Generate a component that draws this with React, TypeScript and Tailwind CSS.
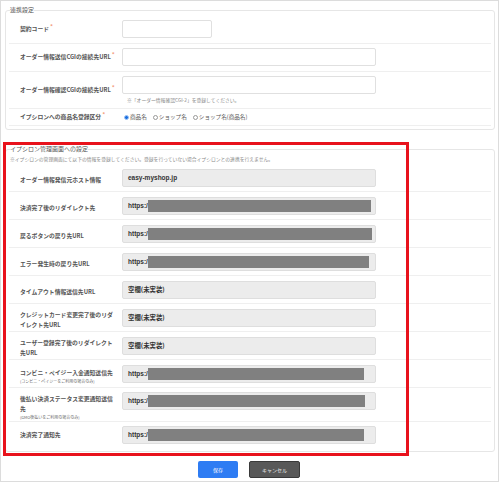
import React from "react";

const JP = "font-['Noto_Sans_CJK_JP',sans-serif]";

type LinkRow = {
  label: string;
  sub?: string;
  kind: "host" | "url" | "blank";
  bar?: number;
  tall?: boolean;
};

const linkRows: LinkRow[] = [
  { label: "オーダー情報発信元ホスト情報", kind: "host" },
  { label: "決済完了後のリダイレクト先", kind: "url", bar: 223 },
  { label: "戻るボタンの戻り先URL", kind: "url", bar: 224 },
  { label: "エラー発生時の戻り先URL", kind: "url", bar: 221 },
  { label: "タイムアウト情報送信先URL", kind: "blank" },
  { label: "クレジットカード変更完了後のリダイレクト先URL", kind: "blank" },
  { label: "ユーザー登録完了後のリダイレクト先URL", kind: "blank" },
  { label: "コンビニ・ペイジー入金通知送信先", sub: "(コンビニ・ペイジーをご利用の場合のみ)", kind: "url", bar: 216 },
  { label: "後払い決済ステータス変更通知送信先", sub: "(GMO後払いをご利用の場合のみ)", kind: "url", bar: 217, tall: true },
];

function Required() {
  return <span className="ml-[1px] align-top text-[6px] font-bold leading-[5px] text-[#f3a07f]">*</span>;
}

function Label({ text, required, sub }: { text: string; required?: boolean; sub?: string }) {
  return (
    <div className="w-[113px] shrink-0 self-center pl-[11px] pr-[6px]">
      <p className="text-[5.8px] font-semibold leading-[10px] text-[#555]">
        {text}
        {required ? <Required /> : null}
      </p>
      {sub ? <p className="text-[4px] leading-[6px] text-[#666]">{sub}</p> : null}
    </div>
  );
}

function Radio({ label, checked }: { label: string; checked?: boolean }) {
  return (
    <span className="flex items-center gap-[1px]">
      {checked ? (
        <span className="h-[5px] w-[5px] rounded-full border border-[#9fc3f5] bg-[#1a6fe0]" />
      ) : (
        <span className="h-[5px] w-[5px] rounded-full border border-[#999] bg-white" />
      )}
      <span className="text-[5.6px] leading-[8px] text-[#555]">{label}</span>
    </span>
  );
}

function ReadOnlyBox({ row }: { row: LinkRow }) {
  return (
    <div className="flex h-[18px] w-[254px] items-center rounded-[2px] border border-[#dedede] bg-[#ececec] pl-[5px]">
      {row.kind === "host" ? (
        <span className="font-['Liberation_Sans',sans-serif] text-[6.5px] font-bold text-[#333]">easy-myshop.jp</span>
      ) : null}
      {row.kind === "blank" ? <span className="text-[6.4px] font-semibold text-[#333]">空欄(未実装)</span> : null}
      {row.kind === "url" ? (
        <>
          <span className="font-['Liberation_Sans',sans-serif] text-[6.5px] font-bold text-[#333]">https:/</span>
          <span className="h-[12px] bg-[#808080]" style={{ width: row.bar }} />
        </>
      ) : null}
    </div>
  );
}

export default function App() {
  return (
    <div className={`relative h-[482px] w-[499px] border border-[#dcdcdc] bg-white ${JP}`}>
      <fieldset className="ml-[4px] mt-[6px] w-[490px] rounded-[3px] border border-[#e6e6e6] px-[3px] pb-[3px]">
        <legend className="ml-[1px] text-[6px] leading-[6px] text-[#555]">連携設定</legend>

        <div className="flex border-b border-[#efefef] pb-[5px] pt-[7px]">
          <Label text="契約コード" required />
          <div className="h-[18px] w-[90px] rounded-[2px] border border-[#e0e0e0] bg-white" />
        </div>

        <div className="flex border-b border-[#efefef] pb-[5px] pt-[4px]">
          <Label text="オーダー情報送信CGIの接続先URL" required />
          <div className="h-[18px] w-[254px] rounded-[2px] border border-[#e0e0e0] bg-white" />
        </div>

        <div className="flex border-b border-[#efefef] pb-[5px] pt-[4px]">
          <Label text="オーダー情報確認CGIの接続先URL" required />
          <div>
            <div className="h-[18px] w-[254px] rounded-[2px] border border-[#e0e0e0] bg-white" />
            <p className="mt-[3px] pl-[5px] text-[4.8px] leading-[6px] text-[#888]">
              ※「オーダー情報確認CGI-2」を登録してください。
            </p>
          </div>
        </div>

        <div className="flex h-[17px] border-b border-[#efefef]">
          <Label text="イプシロンへの商品名登録区分" required />
          <div className="ml-[2px] flex items-center gap-[6px]">
            <Radio label="商品名" checked />
            <Radio label="ショップ名" />
            <Radio label="ショップ名(商品名)" />
          </div>
        </div>
      </fieldset>

      <fieldset className="ml-[4px] mt-[16px] w-[490px] rounded-[3px] border border-[#e6e6e6] px-[3px] pb-[2px]">
        <legend className="ml-[1px] text-[6px] leading-[6px] text-[#555]">イプシロン管理画面への設定</legend>
        <p className="mb-[2px] ml-[1px] mt-[4px] text-[4.8px] leading-[6px] text-[#888]">
          ※イプシロンの管理画面にて以下の情報を登録してください。登録を行っていない場合イプシロンとの連携を行えません。
        </p>

        {linkRows.map((row) => (
          <div
            className={`flex border-b border-[#efefef] ${row.tall ? "h-[34px] items-start pt-[4px]" : "h-[28px] pt-[5px]"}`}
            key={row.label}
          >
            <Label text={row.label} sub={row.sub} />
            <ReadOnlyBox row={row} />
          </div>
        ))}

        <div className="flex pb-[5px] pt-[4px]">
          <Label text="決済完了通知先" />
          <ReadOnlyBox row={{ label: "決済完了通知先", kind: "url", bar: 216 }} />
        </div>
      </fieldset>

      <div className="mt-[9px] flex justify-center gap-[11px] pr-[1px]">
        <button className="h-[17px] w-[40px] rounded-[2px] bg-[#2e7cf3] text-[5px] text-white" type="button">
          保存
        </button>
        <button
          className="h-[17px] w-[51px] rounded-[2px] border border-[#3a3a3a] bg-[#585858] text-[5px] text-[#eee]"
          type="button"
        >
          キャンセル
        </button>
      </div>

      <div className="absolute left-[2px] top-[141px] h-[314px] w-[406px] border-[3px] border-[#e8121c]" />
    </div>
  );
}
